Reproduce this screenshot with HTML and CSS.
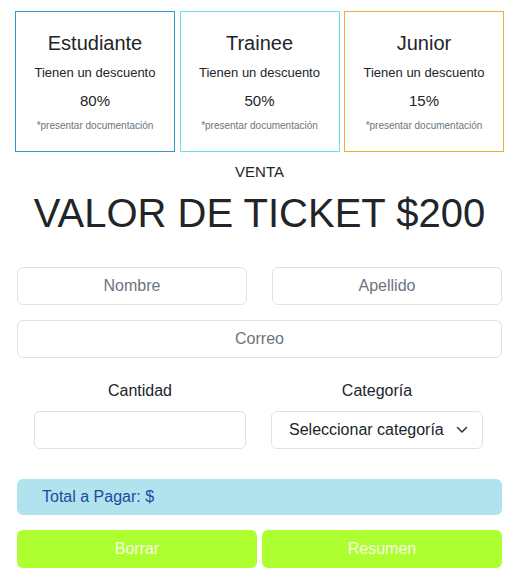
FILE: index.html
```html
<!DOCTYPE html>
<html lang="es">
<head>
  <meta charset="UTF-8">
  <meta name="viewport" content="width=device-width, initial-scale=1.0">
  <title>Venta de tickets</title>
  <link rel="stylesheet" href="styles.css">
</head>
<body>
<div class="container">
  <!-- Tarjetas de descuento -->
  <div class="cards">
    <div class="card card-estudiante">
      <h3>Estudiante</h3>
      <p class="card-text">Tienen un descuento</p>
      <p class="card-value">80%</p>
      <p class="card-note">*presentar documentación</p>
    </div>
    <div class="card card-trainee">
      <h3>Trainee</h3>
      <p class="card-text">Tienen un descuento</p>
      <p class="card-value">50%</p>
      <p class="card-note">*presentar documentación</p>
    </div>
    <div class="card card-junior">
      <h3>Junior</h3>
      <p class="card-text">Tienen un descuento</p>
      <p class="card-value">15%</p>
      <p class="card-note">*presentar documentación</p>
    </div>
  </div>

  <p class="venta">VENTA</p>
  <h1>VALOR DE TICKET $200</h1>

  <!-- Formulario -->
  <form class="form">
    <div class="name-row">
      <input class="input" type="text" placeholder="Nombre">
      <input class="input" type="text" placeholder="Apellido">
    </div>
    <input class="input" type="email" placeholder="Correo">

    <div class="field-row">
      <div class="field">
        <label for="cantidad">Cantidad</label>
        <input class="input" id="cantidad" type="number">
      </div>
      <div class="field">
        <label for="categoria">Categoría</label>
        <div class="select">
          <span>Seleccionar categoría</span>
          <svg width="12" height="8" viewBox="0 0 12 8"><polyline points="1.5,1.5 6,6 10.5,1.5" fill="none" stroke="#343a40" stroke-width="1.6" stroke-linecap="round" stroke-linejoin="round"/></svg>
        </div>
      </div>
    </div>

    <div class="total">Total a Pagar: $</div>

    <div class="buttons">
      <button type="button" class="btn">Borrar</button>
      <button type="button" class="btn">Resumen</button>
    </div>
  </form>
</div>
</body>
</html>
```

FILE: styles.css
```css
* {
  margin: 0;
  padding: 0;
  box-sizing: border-box;
  font-family: 'Liberation Sans', Arial, sans-serif;
}

body {
  background: #fff;
  color: #212529;
}

.container {
  padding: 11px 9px 0 15px;
}

.cards {
  display: grid;
  grid-template-columns: 1fr 1fr 1fr;
  gap: 4.5px;
}

.card {
  height: 141px;
  border: 1px solid #3399cc;
  padding: 19px 4px 0;
  text-align: center;
  display: flex;
  flex-direction: column;
  align-items: center;
}

.card-trainee {
  border-color: #66e3e6;
}

.card-junior {
  border-color: #e5b23a;
}

.card h3 {
  font-size: 20px;
  font-weight: normal;
  line-height: 24px;
}

.card-text {
  font-size: 13px;
  line-height: 20px;
  margin-top: 8px;
}

.card-value {
  font-size: 15px;
  line-height: 20px;
  margin-top: 8px;
}

.card-note {
  font-size: 10px;
  line-height: 14px;
  margin-top: 7.5px;
  color: #6c757d;
}

.venta {
  text-align: center;
  font-size: 15px;
  line-height: 18px;
  margin-top: 11px;
}

h1 {
  text-align: center;
  font-size: 40px;
  font-weight: normal;
  line-height: 48px;
  margin-top: 8px;
}

.form {
  margin: 30px 2px 0 2px;
  display: flex;
  flex-direction: column;
}

.input {
  display: block;
  width: 100%;
  height: 38px;
  border: 1px solid #dee2e6;
  border-radius: 6px;
  font-size: 16px;
  text-align: center;
  color: #212529;
  background: #fff;
}

.input::placeholder {
  color: #6c757d;
}

.name-row {
  display: grid;
  grid-template-columns: 1fr 1fr;
  column-gap: 25px;
  margin-bottom: 15px;
}

.field-row {
  display: grid;
  grid-template-columns: 212px 212px;
  column-gap: 25px;
  padding-left: 17px;
  margin-top: 21px;
}

.field {
  display: flex;
  flex-direction: column;
  align-items: center;
}

.field label {
  font-size: 16px;
  line-height: 24px;
  margin-bottom: 8px;
}

.select {
  width: 100%;
  height: 38px;
  border: 1px solid #dee2e6;
  border-radius: 6px;
  display: flex;
  align-items: center;
  justify-content: space-between;
  padding: 0 14px 0 17px;
  font-size: 16px;
}

.total {
  margin-top: 30px;
  height: 36px;
  background: #b0e3ee;
  border-radius: 6px;
  padding: 6px 25px;
  font-size: 16px;
  line-height: 24px;
  color: #1e4a9e;
}

.buttons {
  display: grid;
  grid-template-columns: 1fr 1fr;
  gap: 5px;
  margin-top: 15px;
}

.btn {
  height: 38px;
  border: none;
  border-radius: 6px;
  background: #adff2f;
  color: #f8fce6;
  font-size: 16px;
  cursor: pointer;
}
```
